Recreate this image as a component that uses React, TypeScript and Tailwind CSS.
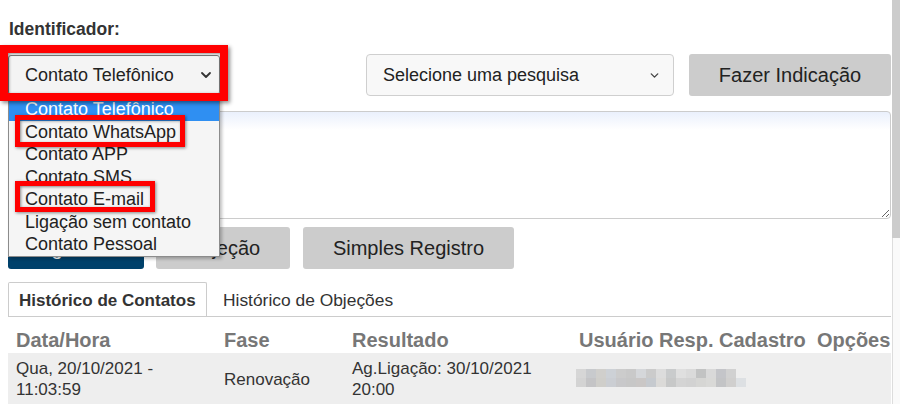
import { ChevronDown } from "lucide-react";

const options = [
  "Contato Telefônico",
  "Contato WhatsApp",
  "Contato APP",
  "Contato SMS",
  "Contato E-mail",
  "Ligação sem contato",
  "Contato Pessoal",
];

// pixelated (blurred) user name
const blurTop = ["#d6d6d6", "#c8cacd", "#d0cfcc", "#cdd1d6", "#cccccc", "#c9c9c9", "#d5d7da", "#cbcbcb", "#dcdcdc", "#c9cbcc", "#dfdfdf", "#dadada", "#c2c3c3", "#d9d9d9", "#c4c5c9", "#d1d1d1"];
const blurBottom = ["#d3d3d3", "#c4c4c6", "#cfceca", "#cbced3", "#c8c8ca", "#c7c7c7", "#cac7c6", "#c6cacf", "#dbdad8", "#c7c8c8", "#d4d4d4", "#d2d2d2", "#d6d6d4", "#d9d9d7", "#c3c4c6", "#d0cfce", "#dde0e3"];

function BlurName() {
  return (
    <div className="flex flex-col mt-[11px]">
      <div className="flex">
        {blurTop.map((c, i) => (
          <span key={i} className="block w-[10px] h-[9px]" style={{ background: c }} />
        ))}
      </div>
      <div className="flex">
        {blurBottom.map((c, i) => (
          <span key={i} className="block w-[10px] h-[9px]" style={{ background: c }} />
        ))}
      </div>
    </div>
  );
}

export default function App() {
  return (
    <div className="flex w-[900px] h-[404px] overflow-hidden bg-white font-['Liberation_Sans',Arial,sans-serif] text-[#333]">
      <div className="relative flex-1 pl-2 pr-[1px]">
        <div className="pt-[19px] pl-[1px] text-[17.5px] font-bold leading-[20px] text-[#333]">Identificador:</div>

        {/* selects row */}
        <div className="mt-[15px] flex items-center h-[42px]">
          <div className="flex items-center justify-between w-[212px] h-[40px] pl-[16px] pr-[5px] border border-[#7a7a7a] rounded-[3px] bg-[#f4f4f4] text-[18px] text-[#222]">
            <span className="whitespace-nowrap">Contato Telefônico</span>
            <ChevronDown size={16} strokeWidth={2.75} color="#333" />
          </div>
          <div className="ml-[146px] flex items-center justify-between w-[308px] h-[42px] pl-[16px] pr-[12px] border border-[#cfcfcf] rounded-[4px] bg-[#f8f8f8] text-[18px] text-[#222]">
            <span>Selecione uma pesquisa</span>
            <ChevronDown size={13} strokeWidth={2.5} color="#444" />
          </div>
          <button className="ml-[15px] w-[202px] h-[42px] rounded-[3px] bg-[#cccccc] text-[20px] text-[#222]">
            Fazer Indicação
          </button>
        </div>

        {/* observation */}
        <textarea
          className="mt-[15px] block w-full h-[108px] border border-[#cccccc] rounded-[4px] bg-[linear-gradient(to_bottom,#eaf0fc,#ffffff_18px)] outline-none"
          readOnly
        />

        {/* action buttons */}
        <div className="mt-[8px] flex h-[42px]">
          <button className="w-[136px] rounded-[3px] bg-[#00416b] text-[20px] text-white">Agendar</button>
          <button className="ml-[12px] w-[134px] rounded-[3px] bg-[#cccccc] text-[20px] text-[#222]">Objeção</button>
          <button className="ml-[13px] w-[211px] rounded-[3px] bg-[#cccccc] text-[20px] text-[#222]">Simples Registro</button>
        </div>

        {/* tabs */}
        <div className="mt-[14px] flex items-end border-b border-[#cccccc] h-[34px]">
          <div className="h-[34px] w-[199px] flex items-center pt-[2px] px-[10px] border-t border-l border-r border-[#cccccc] rounded-t-[2px] text-[17px] font-bold text-[#333] whitespace-nowrap">
            Histórico de Contatos
          </div>
          <div className="h-[34px] flex items-center pt-[2px] ml-[16px] text-[17.4px] text-[#333]">Histórico de Objeções</div>
        </div>

        {/* table */}
        <div className="grid grid-cols-[208px_128px_227px_238px_1fr] pt-[12px] pb-[2px] text-[20px] font-bold leading-[22px] text-[#777] whitespace-nowrap">
          <div className="pl-[8px]">Data/Hora</div>
          <div className="pl-[8px]">Fase</div>
          <div className="pl-[8px]">Resultado</div>
          <div className="pl-[8px]">Usuário Resp. Cadastro</div>
          <div className="pl-[8px]">Opções</div>
        </div>
        <div className="grid grid-cols-[208px_128px_227px_238px_1fr] items-center bg-[#eeeeee] pt-[5px] pb-[5px] text-[17px] leading-[21px] text-[#333]">
          <div className="pl-[8px]">
            Qua, 20/10/2021 -<br />11:03:59
          </div>
          <div className="pl-[8px]">Renovação</div>
          <div className="pl-[8px]">
            Ag.Ligação: 30/10/2021<br />20:00
          </div>
          <div className="pl-[5px] self-start">
            <BlurName />
          </div>
          <div />
        </div>

        {/* open dropdown of the first select */}
        <div className="absolute left-[8px] top-[97px] w-[212px] border border-[#8c8c8c] bg-[#f5f5f5] shadow-[2px_2px_3px_rgba(0,0,0,0.25)] text-[18px] text-[#222]">
          {options.map((o, i) => (
            <div
              key={o}
              className={
                i === 0
                  ? "h-[22.5px] leading-[22.5px] pl-[16px] whitespace-nowrap bg-[#2f8ff2] text-white"
                  : "h-[22.5px] leading-[22.5px] pl-[16px] whitespace-nowrap"
              }
            >
              {o}
            </div>
          ))}
        </div>

        {/* red highlight annotations */}
        <div className="absolute left-0 top-[45px] w-[228px] h-[56px] border-[8px] border-[#ff0000] shadow-[2px_2px_4px_rgba(0,0,0,0.45),inset_1px_1px_3px_rgba(0,0,0,0.45)]" />
        <div className="absolute left-[15px] top-[115px] w-[170px] h-[32px] border-[5px] border-[#ff0000] shadow-[1px_1px_3px_rgba(0,0,0,0.45),inset_1px_1px_3px_rgba(0,0,0,0.45)]" />
        <div className="absolute left-[15px] top-[181px] w-[140px] h-[31px] border-[5px] border-[#ff0000] shadow-[1px_1px_3px_rgba(0,0,0,0.45),inset_1px_1px_3px_rgba(0,0,0,0.45)]" />
      </div>

      {/* scrollbar */}
      <div className="flex flex-col w-[8px]">
        <div className="h-[238px] bg-[#cccccc]" />
        <div className="flex-1 bg-[#fafafa] border-l border-[#dddddd]" />
      </div>
    </div>
  );
}
